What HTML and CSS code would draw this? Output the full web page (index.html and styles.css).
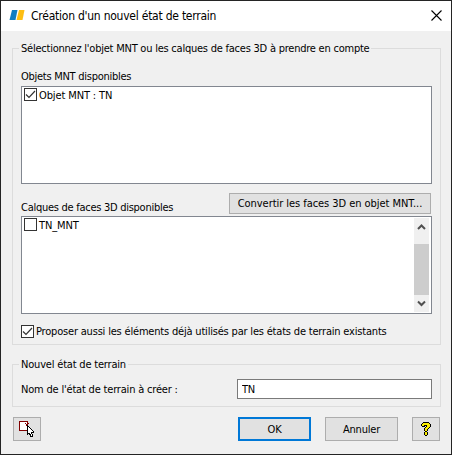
FILE: index.html
```html
<!DOCTYPE html>
<html lang="fr">
<head>
    <meta charset="UTF-8">
    <meta name="viewport" content="width=device-width, initial-scale=1.0">
    <title>Création d'un nouvel état de terrain</title>
    <link rel="stylesheet" href="styles.css">
</head>
<body>
    <div class="dialog">
        <header class="title-bar">
            <svg class="logo" width="16" height="10" viewBox="0 0 16 10">
                <path d="M3 0h5.500L6.500 10H.5z" fill="#0f7dc2"/>
                <path d="M10 0h5.500l-2 10H7.500z" fill="#fdbe12"/>
            </svg>
            <h1>Création d'un nouvel état de terrain</h1>
            <svg class="close" width="11" height="11" viewBox="0 0 11 11">
                <path d="M.5 .5l10 10M10.500 .5l-10 10" stroke="#000" stroke-width="1.100" fill="none"/>
            </svg>
        </header>

        <main class="content">
            <fieldset class="group group-source">
                <legend>Sélectionnez l'objet MNT ou les calques de faces 3D à prendre en compte</legend>
                <div class="label-row label-objects"><span>Objets MNT disponibles</span></div>
                <div class="list">
                    <label class="item">
                        <span class="check"><svg width="11" height="11" viewBox="0 0 11 11"><path d="M1 5.500l3 3 6-6.500"/></svg></span>
                        <span class="item-text">Objet MNT : TN</span>
                    </label>
                </div>
                <div class="label-row label-layers">
                    <span>Calques de faces 3D disponibles</span>
                    <button class="btn btn-convert">Convertir les faces 3D en objet MNT...</button>
                </div>
                <div class="list list-scroll">
                    <label class="item">
                        <span class="check"></span>
                        <span class="item-text">TN_MNT</span>
                    </label>
                    <div class="scrollbar">
                        <svg width="15" height="17" viewBox="0 0 15 17"><path d="M4 11l3.500-3.500L11 11"/></svg>
                        <div class="thumb"></div>
                        <svg width="15" height="17" viewBox="0 0 15 17"><path d="M4 6.500L7.500 10 11 6.500"/></svg>
                    </div>
                </div>
                <label class="item item-option">
                    <span class="check"><svg width="11" height="11" viewBox="0 0 11 11"><path d="M1 5.500l3 3 6-6.500"/></svg></span>
                    <span>Proposer aussi les éléments déjà utilisés par les états de terrain existants</span>
                </label>
            </fieldset>

            <fieldset class="group group-name">
                <legend>Nouvel état de terrain</legend>
                <div class="name-row">
                    <label for="name">Nom de l'état de terrain à créer :</label>
                    <input type="text" id="name" value="TN">
                </div>
            </fieldset>

            <footer class="actions">
                <button class="btn btn-icon" aria-label="Sélectionner">
                    <svg width="16" height="16" viewBox="0 0 16 16" shape-rendering="crispEdges">
                        <rect x=".5" y=".5" width="8" height="9" fill="#fff" stroke="#800000"/>
                        <path d="M6 2h1v1h2V2h1v1H9v1H8v1H7V4H7V3H6z" fill="#800000"/>
                        <path d="M8 4h1v1h1v1h1v1h1v1h1v1h1v1h1v2h-2v1h1v3h-3v-2h-1v-1H9v1H8z" fill="#000"/>
                        <path d="M9 6h1v1h1v1h1v1h1v1h1v1h-2v2h1v2h-1v-2h-1v-1h-1v0H9z" fill="#fff"/>
                    </svg>
                </button>
                <button class="btn btn-ok">OK</button>
                <button class="btn btn-cancel">Annuler</button>
                <button class="btn btn-icon" aria-label="Aide">
                    <svg width="10" height="14" viewBox="0 0 10 14" shape-rendering="crispEdges">
                        <path d="M2 0h6v1h1v1h1v3H9v1H8v1H7v2H6v1h1v3H6v1H4v-1H3v-3h1V9H3V6h1V5h1V4H4v1H1V4H0V2h1V1h1z" fill="#000"/>
                        <path d="M2 1h6v1h1v3H8v1H7v1H6v2H4V6h1V5h1V3H3v1H1V2h1zM4 10h2v3H4z" fill="#f8ec00"/>
                    </svg>
                </button>
            </footer>
        </main>
    </div>
</body>
</html>
```

FILE: styles.css
```css
:root {
    --face: #f0f0f0;
    --button: #e1e1e1;
    --line: #dcdcdc;
    --accent: #0078d7;
}

* {
    margin: 0;
    padding: 0;
    box-sizing: border-box;
}

body,
button,
input {
    font-family: Tahoma, 'DejaVu Sans Condensed', 'DejaVu Sans', sans-serif;
    font-size: 11px;
    line-height: 13px;
    letter-spacing: -0.19px;
    color: #000;
}

svg {
    display: block;
    flex: none;
}

.dialog {
    width: 452px;
    height: 455px;
    border: 1px solid #242424;
    background-color: var(--face);
    white-space: nowrap;
    overflow: hidden;
}

.title-bar {
    display: flex;
    align-items: center;
    height: 30px;
    padding: 0 9px 0 8px;
    background-color: #fff;
}

.title-bar svg {
    margin-bottom: 2px;
}

.title-bar h1 {
    flex: 1;
    margin-left: 6px;
    font-size: 12px;
    font-weight: normal;
    letter-spacing: -0.24px;
}

.content {
    padding: 11px 10px 0 11px;
}

.group {
    min-width: 0;
    border: 1px solid var(--line);
    padding: 0 8px;
}

.group legend {
    height: 13px;
    margin-left: -2px;
    padding: 0 2px;
}

.group-source {
    height: 303px;
}

.group-source legend {
    letter-spacing: -0.23px;
}

.label-row {
    display: flex;
    justify-content: space-between;
    letter-spacing: -0.27px;
}

.label-objects {
    padding: 15px 0 3px;
}

.label-layers {
    height: 32px;
    padding: 9px 1px 2px 0;
    align-items: flex-end;
}

.list {
    height: 98px;
    padding: 1px 2px;
    border: 1px solid #828790;
    background-color: #fff;
}

.list-scroll {
    display: flex;
    justify-content: space-between;
}

.item {
    display: flex;
    height: 13px;
    gap: 2px;
}

.item-text {
    padding-top: 1px;
    letter-spacing: -0.12px;
}

.check {
    flex: none;
    width: 13px;
    height: 13px;
    border: 1px solid #333;
    background-color: #fff;
}

.check path {
    fill: none;
    stroke: #333;
    stroke-width: 1.2;
}

.item-option {
    margin-top: 11px;
}

.scrollbar {
    display: flex;
    flex-direction: column;
    justify-content: space-between;
    width: 15px;
    height: 94px;
    background-color: var(--face);
}

.scrollbar path {
    fill: none;
    stroke: #505050;
    stroke-width: 2;
}

.thumb {
    height: 51px;
    margin-top: 8px;
    background-color: #cdcdcd;
}

.group-name {
    height: 49px;
    margin-top: 13px;
}

.name-row {
    display: flex;
    align-items: center;
    justify-content: space-between;
    padding-top: 8px;
}

.name-row input {
    width: 195px;
    height: 20px;
    padding: 0 4px;
    border: 1px solid #7a7a7a;
    background-color: #fff;
}

.actions {
    display: flex;
    padding: 10px 1px 0;
}

.btn {
    display: flex;
    align-items: center;
    justify-content: center;
    width: 73px;
    height: 24px;
    border: 1px solid #adadad;
    background-color: var(--button);
    white-space: nowrap;
}

.btn-convert {
    width: 202px;
    height: 21px;
    letter-spacing: -0.05px;
}

.btn-icon {
    width: 28px;
}

.btn-ok {
    margin-left: auto;
    border: 2px solid var(--accent);
}

.btn-cancel {
    margin: 0 14px;
}
```
